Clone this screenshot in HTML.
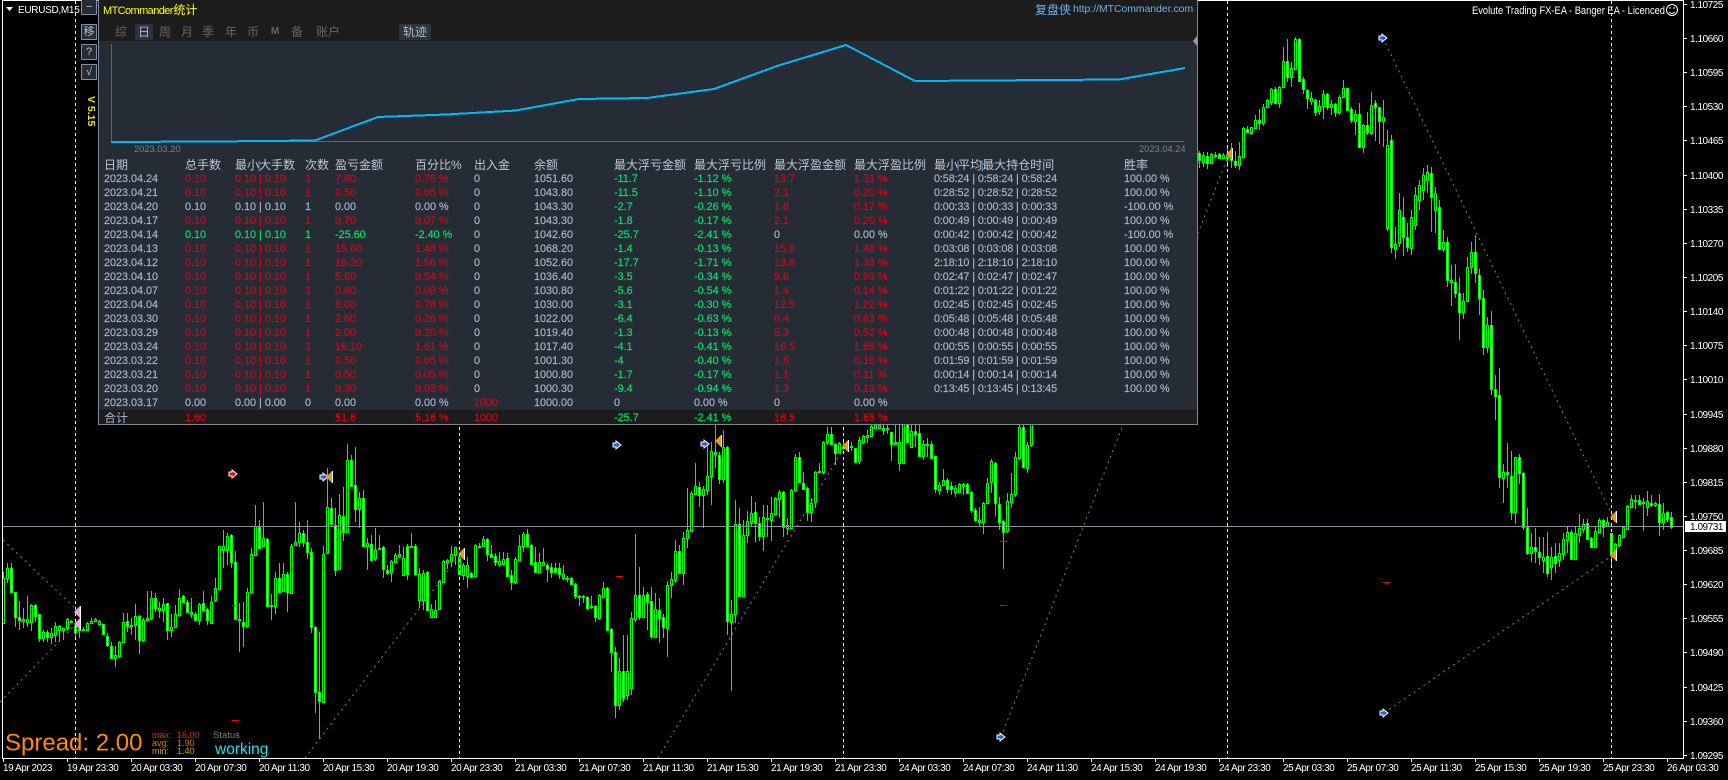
<!DOCTYPE html>
<html lang="zh"><head><meta charset="utf-8"><title>EURUSD,M15</title>
<style>
html,body{margin:0;padding:0;background:#000;width:1728px;height:780px;overflow:hidden;font-family:"Liberation Sans","Noto Sans CJK SC",sans-serif}
svg{position:absolute;left:0;top:0}
.abs{position:absolute;white-space:nowrap}
.ax text{font-size:10px;fill:#fff;letter-spacing:-.45px}
#ph{position:absolute;left:98px;top:0;width:1100px;height:41px;background:#1c1c1c;border-right:1px solid #7d8899;border-left:1px solid #7d8899;box-sizing:border-box}
#pb{position:absolute;left:98px;top:41px;width:1100px;height:384px;background:#262c35;border:1px solid #7d8899;border-top:0;box-sizing:border-box}
#pt{position:absolute;left:99px;top:410px;width:1098px;height:14px;background:#1c1c1c}
table{position:absolute;left:104px;top:158px;border-collapse:collapse;table-layout:fixed;width:1090px}
td{padding:0;height:14px;line-height:14px;font-size:10.8px;white-space:nowrap;color:#a9b8cf;overflow:visible;-webkit-text-stroke:.15px}
tr.r td:nth-child(n+2):nth-child(-n+6){color:#e4000f}
tr.g td:nth-child(n+2):nth-child(-n+6){color:#00e864}
td:nth-child(9),td:nth-child(10){color:#00e864}
td:nth-child(11),td:nth-child(12){color:#e4000f}
td:nth-child(13){letter-spacing:-.1px}
td.n{color:#a9b8cf!important}
td.d{color:#e4000f!important}
tr.h td{color:#bcc7d6!important;font-size:12px;letter-spacing:0;-webkit-text-stroke:0}
tr.h i{font-style:normal;color:#5b8fd0;margin:0 -1.5px}
tr.t td{position:relative;top:1px}
.tab{position:absolute;top:24px;height:16px;line-height:16px;font-size:12px;color:#666;text-align:center;white-space:nowrap}
.btn{position:absolute;left:81px;height:14px;border:1px solid #7f92ad;background:#262c35;color:#b8c0cc;font-size:11px;line-height:14px;text-align:center;box-sizing:content-box;width:14px;border-radius:1px}
</style></head><body>
<svg id="c" width="1728" height="780" viewBox="0 0 1728 780">
<g fill="none" stroke="#808080" stroke-dasharray="2 4" stroke-width="1">
<path d="M3 540L75 608M0 702L75 625M305 758L461 554M658 758L845 446M1001 737L1229 154M1383 38L1613 517M1384 713L1613 555"/>
</g>
<g shape-rendering="crispEdges" stroke="#00ff00" stroke-width="1">
<path id="w" fill="none"/><path id="h" fill="#000"/><path id="b" fill="#fff"/>
</g>
<path shape-rendering="crispEdges" stroke="#8a929e" d="M3 526.5H1683"/>
<path shape-rendering="crispEdges" stroke="#fff" stroke-dasharray="3 3" d="M75.5 1V758M459.5 1V758M843.5 1V758M1227.5 1V758M1611.5 1V758"/>
<path shape-rendering="crispEdges" stroke="#f00" d="M232 605.5h7M232 720.5h7M616 576.5h7M1000 541.5h7M1000 605.5h7M1383 582.5h7"/>
<defs>
<g id="ba"><polygon points="-4,-2 -1,-2 -1,-4 4,0 -1,4 -1,2 -4,2" fill="#2a5fe0" stroke="#fff"/></g>
<g id="ra"><polygon points="-4,-2 -1,-2 -1,-4 4,0 -1,4 -1,2 -4,2" fill="#f00" stroke="#fff"/></g>
<g id="ot"><polygon points="3,-6 3,6 -3,0" fill="#e09a20"/><path d="M3.5 -6V6" stroke="#fff"/></g>
<g id="pt2"><polygon points="3,-6 3,6 -3,0" fill="#f0a0e8"/><path d="M3.5 -6V6" stroke="#fff"/></g>
</defs>
<use href="#ra" x="233" y="474"/>
<use href="#ba" x="324" y="477"/><use href="#ba" x="617" y="445"/><use href="#ba" x="705" y="444"/><use href="#ba" x="1383" y="38"/><use href="#ba" x="1001" y="737"/><use href="#ba" x="1384" y="713"/>
<use href="#ot" x="329" y="477"/><use href="#ot" x="461" y="554"/><use href="#ot" x="718" y="441"/><use href="#ot" x="845" y="446"/><use href="#ot" x="1229" y="154"/><use href="#ot" x="1613" y="517"/><use href="#ot" x="1613" y="555"/>
<use href="#pt2" x="77" y="612"/><use href="#pt2" x="77" y="624"/>
<path shape-rendering="crispEdges" stroke="#fff" fill="none" d="M2.5 0V758.5H1683.5V0M2 .5H1684"/>
<path shape-rendering="crispEdges" stroke="#fff" d="M3.5 758v4M67.5 758v4M131.5 758v4M195.5 758v4M259.5 758v4M323.5 758v4M387.5 758v4M451.5 758v4M515.5 758v4M579.5 758v4M643.5 758v4M707.5 758v4M771.5 758v4M835.5 758v4M899.5 758v4M963.5 758v4M1027.5 758v4M1091.5 758v4M1155.5 758v4M1219.5 758v4M1283.5 758v4M1347.5 758v4M1411.5 758v4M1475.5 758v4M1539.5 758v4M1603.5 758v4M1667.5 758v4"/>
<path shape-rendering="crispEdges" stroke="#fff" d="M1683 4.5h4M1683 38.5h4M1683 72.5h4M1683 106.5h4M1683 140.5h4M1683 175.5h4M1683 209.5h4M1683 243.5h4M1683 277.5h4M1683 311.5h4M1683 345.5h4M1683 379.5h4M1683 414.5h4M1683 448.5h4M1683 482.5h4M1683 516.5h4M1683 550.5h4M1683 584.5h4M1683 618.5h4M1683 652.5h4M1683 687.5h4M1683 721.5h4M1683 755.5h4"/>
<g class="ax">
<text x="3" y="771">19 Apr 2023</text><text x="67" y="771">19 Apr 23:30</text><text x="131" y="771">20 Apr 03:30</text><text x="195" y="771">20 Apr 07:30</text><text x="259" y="771">20 Apr 11:30</text><text x="323" y="771">20 Apr 15:30</text><text x="387" y="771">20 Apr 19:30</text><text x="451" y="771">20 Apr 23:30</text><text x="515" y="771">21 Apr 03:30</text><text x="579" y="771">21 Apr 07:30</text><text x="643" y="771">21 Apr 11:30</text><text x="707" y="771">21 Apr 15:30</text><text x="771" y="771">21 Apr 19:30</text><text x="835" y="771">21 Apr 23:30</text><text x="899" y="771">24 Apr 03:30</text><text x="963" y="771">24 Apr 07:30</text><text x="1027" y="771">24 Apr 11:30</text><text x="1091" y="771">24 Apr 15:30</text><text x="1155" y="771">24 Apr 19:30</text><text x="1219" y="771">24 Apr 23:30</text><text x="1283" y="771">25 Apr 03:30</text><text x="1347" y="771">25 Apr 07:30</text><text x="1411" y="771">25 Apr 11:30</text><text x="1475" y="771">25 Apr 15:30</text><text x="1539" y="771">25 Apr 19:30</text><text x="1603" y="771">25 Apr 23:30</text><text x="1667" y="771">26 Apr 03:30</text>
<text x="1690" y="8">1.10725</text><text x="1690" y="42">1.10660</text><text x="1690" y="76">1.10595</text><text x="1690" y="110">1.10530</text><text x="1690" y="144">1.10465</text><text x="1690" y="179">1.10400</text><text x="1690" y="213">1.10335</text><text x="1690" y="247">1.10270</text><text x="1690" y="281">1.10205</text><text x="1690" y="315">1.10140</text><text x="1690" y="349">1.10075</text><text x="1690" y="383">1.10010</text><text x="1690" y="418">1.09945</text><text x="1690" y="452">1.09880</text><text x="1690" y="486">1.09815</text><text x="1690" y="520">1.09750</text><text x="1690" y="554">1.09685</text><text x="1690" y="588">1.09620</text><text x="1690" y="622">1.09555</text><text x="1690" y="656">1.09490</text><text x="1690" y="691">1.09425</text><text x="1690" y="725">1.09360</text><text x="1690" y="759">1.09295</text>
</g>
<rect x="1685" y="521" width="41" height="11" fill="#fff"/>
<text x="1690" y="530" font-size="10" fill="#000" letter-spacing="-.45">1.09731</text>
<text x="1472" y="14" font-size="11" fill="#fff" textLength="193" lengthAdjust="spacingAndGlyphs">Evolute Trading FX-EA - Banger EA - Licenced</text>
<g fill="none" stroke="#fff"><circle cx="1672" cy="10" r="5.5"/><path d="M1669 12q3 3 6 0"/></g><circle cx="1670" cy="8" r=".8" fill="#fff"/><circle cx="1674" cy="8" r=".8" fill="#fff"/>
<polygon points="6,7 13,7 9.5,11" fill="#fff"/>
<text x="18" y="13" font-size="10" fill="#fff" letter-spacing="-.3">EURUSD,M15</text>
<text x="5" y="750.5" font-size="24" fill="#ff8c00">Spread: 2.00</text>
<g font-size="9">
<text x="152" y="738" fill="#e03000">max:</text><text x="177" y="738" fill="#e03000">16.00</text>
<text x="152" y="746" fill="#d08000">avg:</text><text x="177" y="746" fill="#d08000">1.90</text>
<text x="152" y="754" fill="#c8a000">min:</text><text x="177" y="754" fill="#c8a000">1.40</text>
<text x="213" y="738" fill="#808080" font-size="9.5">Status</text>
</g>
<text x="215" y="754" font-size="15.5" fill="#19e5f5">working</text>
</svg>

<div class="btn" style="top:-1px">−</div>
<div class="btn" style="top:24px">移</div>
<div class="btn" style="top:44px">?</div>
<div class="btn" style="top:64px">√</div>
<div class="abs" style="left:86px;top:96px;writing-mode:vertical-rl;font-size:10.5px;line-height:10px;color:#eaea00;font-weight:bold">V 5.15</div>

<div id="ph"></div><div id="pb"></div><div id="pt"></div>
<div class="abs" style="left:103px;top:3px;font-size:11px;line-height:14px;color:#ffff00;letter-spacing:-.6px">MTCommander<span style="font-size:12px;letter-spacing:0;margin-left:.5px">统计</span></div>
<div class="abs" style="left:1035px;top:3px;font-size:12px;line-height:14px;color:#6cb4ee">复盘侠</div>
<div class="abs" style="left:1073px;top:3px;font-size:10.4px;line-height:14px;color:#6cb4ee">http://MTCommander.com</div>
<div class="tab" style="left:114px;width:14px">综</div>
<div class="tab" style="left:135px;width:18px;background:#2d343e;color:#a8b4c6;border-radius:2px">日</div>
<div class="tab" style="left:158px;width:14px">周</div>
<div class="tab" style="left:180px;width:14px">月</div>
<div class="tab" style="left:201px;width:14px">季</div>
<div class="tab" style="left:224px;width:14px">年</div>
<div class="tab" style="left:246px;width:14px">币</div>
<div class="tab" style="left:268px;width:14px;font-size:10px;font-weight:bold">M</div>
<div class="tab" style="left:290px;width:14px">备</div>
<div class="tab" style="left:315px;width:26px">账户</div>
<div class="tab" style="left:399px;width:32px;background:#2d343e;color:#b0b8c8;border-radius:2px">轨迹</div>

<svg width="1728" height="160" viewBox="0 0 1728 160" style="pointer-events:none">
<path shape-rendering="crispEdges" stroke="#666" fill="none" d="M111.5 44V141.5H1184"/>
<polyline fill="none" stroke="#00b8f5" stroke-width="2" shape-rendering="crispEdges" points="111,142 213,141.5 315,140.5 378,117 446,114.5 516,110.5 579,99 647,98 714,89 777,66 846,45 915,81 983,80.5 1050,80 1119,79.5 1185,68"/>
<polygon points="1197,36 1197,46 1193,41" fill="#9aa0a8"/>
<text x="134" y="152" font-size="9.3" fill="#78828e">2023.03.20</text>
<text x="1139" y="152" font-size="9.3" fill="#78828e">2023.04.24</text>
</svg>

<table>
<colgroup><col style="width:81px"><col style="width:50px"><col style="width:70px"><col style="width:30px"><col style="width:80px"><col style="width:59px"><col style="width:60px"><col style="width:80px"><col style="width:80px"><col style="width:80px"><col style="width:80px"><col style="width:80px"><col style="width:190px"><col style="width:70px"></colgroup>
<tr class="h"><td>日期</td><td>总手数</td><td>最小<i>|</i>大手数</td><td>次数</td><td>盈亏金额</td><td>百分比%</td><td>出入金</td><td>余额</td><td>最大浮亏金额</td><td>最大浮亏比例</td><td>最大浮盈金额</td><td>最大浮盈比例</td><td>最小<i>|</i>平均<i>|</i>最大持仓时间</td><td>胜率</td></tr>
<tr class="r"><td>2023.04.24</td><td>0.10</td><td>0.10 | 0.10</td><td>1</td><td>7.80</td><td>0.75 %</td><td>0</td><td>1051.60</td><td>-11.7</td><td>-1.12 %</td><td>13.7</td><td>1.31 %</td><td>0:58:24 | 0:58:24 | 0:58:24</td><td>100.00 %</td></tr>
<tr class="r"><td>2023.04.21</td><td>0.10</td><td>0.10 | 0.10</td><td>1</td><td>0.50</td><td>0.05 %</td><td>0</td><td>1043.80</td><td>-11.5</td><td>-1.10 %</td><td>2.1</td><td>0.20 %</td><td>0:28:52 | 0:28:52 | 0:28:52</td><td>100.00 %</td></tr>
<tr><td>2023.04.20</td><td>0.10</td><td>0.10 | 0.10</td><td>1</td><td>0.00</td><td>0.00 %</td><td>0</td><td>1043.30</td><td>-2.7</td><td>-0.26 %</td><td>1.8</td><td>0.17 %</td><td>0:00:33 | 0:00:33 | 0:00:33</td><td>-100.00 %</td></tr>
<tr class="r"><td>2023.04.17</td><td>0.10</td><td>0.10 | 0.10</td><td>1</td><td>0.70</td><td>0.07 %</td><td>0</td><td>1043.30</td><td>-1.8</td><td>-0.17 %</td><td>2.1</td><td>0.20 %</td><td>0:00:49 | 0:00:49 | 0:00:49</td><td>100.00 %</td></tr>
<tr class="g"><td>2023.04.14</td><td>0.10</td><td>0.10 | 0.10</td><td>1</td><td>-25.60</td><td>-2.40 %</td><td>0</td><td>1042.60</td><td>-25.7</td><td>-2.41 %</td><td class="n">0</td><td class="n">0.00 %</td><td>0:00:42 | 0:00:42 | 0:00:42</td><td>-100.00 %</td></tr>
<tr class="r"><td>2023.04.13</td><td>0.10</td><td>0.10 | 0.10</td><td>1</td><td>15.60</td><td>1.48 %</td><td>0</td><td>1068.20</td><td>-1.4</td><td>-0.13 %</td><td>15.6</td><td>1.48 %</td><td>0:03:08 | 0:03:08 | 0:03:08</td><td>100.00 %</td></tr>
<tr class="r"><td>2023.04.12</td><td>0.10</td><td>0.10 | 0.10</td><td>1</td><td>16.20</td><td>1.56 %</td><td>0</td><td>1052.60</td><td>-17.7</td><td>-1.71 %</td><td>13.8</td><td>1.33 %</td><td>2:18:10 | 2:18:10 | 2:18:10</td><td>100.00 %</td></tr>
<tr class="r"><td>2023.04.10</td><td>0.10</td><td>0.10 | 0.10</td><td>1</td><td>5.60</td><td>0.54 %</td><td>0</td><td>1036.40</td><td>-3.5</td><td>-0.34 %</td><td>9.6</td><td>0.93 %</td><td>0:02:47 | 0:02:47 | 0:02:47</td><td>100.00 %</td></tr>
<tr class="r"><td>2023.04.07</td><td>0.10</td><td>0.10 | 0.10</td><td>1</td><td>0.80</td><td>0.08 %</td><td>0</td><td>1030.80</td><td>-5.6</td><td>-0.54 %</td><td>1.4</td><td>0.14 %</td><td>0:01:22 | 0:01:22 | 0:01:22</td><td>100.00 %</td></tr>
<tr class="r"><td>2023.04.04</td><td>0.10</td><td>0.10 | 0.10</td><td>1</td><td>8.00</td><td>0.78 %</td><td>0</td><td>1030.00</td><td>-3.1</td><td>-0.30 %</td><td>12.5</td><td>1.22 %</td><td>0:02:45 | 0:02:45 | 0:02:45</td><td>100.00 %</td></tr>
<tr class="r"><td>2023.03.30</td><td>0.10</td><td>0.10 | 0.10</td><td>1</td><td>2.60</td><td>0.26 %</td><td>0</td><td>1022.00</td><td>-6.4</td><td>-0.63 %</td><td>6.4</td><td>0.63 %</td><td>0:05:48 | 0:05:48 | 0:05:48</td><td>100.00 %</td></tr>
<tr class="r"><td>2023.03.29</td><td>0.10</td><td>0.10 | 0.10</td><td>1</td><td>2.00</td><td>0.20 %</td><td>0</td><td>1019.40</td><td>-1.3</td><td>-0.13 %</td><td>5.3</td><td>0.52 %</td><td>0:00:48 | 0:00:48 | 0:00:48</td><td>100.00 %</td></tr>
<tr class="r"><td>2023.03.24</td><td>0.10</td><td>0.10 | 0.10</td><td>1</td><td>16.10</td><td>1.61 %</td><td>0</td><td>1017.40</td><td>-4.1</td><td>-0.41 %</td><td>16.5</td><td>1.65 %</td><td>0:00:55 | 0:00:55 | 0:00:55</td><td>100.00 %</td></tr>
<tr class="r"><td>2023.03.22</td><td>0.10</td><td>0.10 | 0.10</td><td>1</td><td>0.50</td><td>0.05 %</td><td>0</td><td>1001.30</td><td>-4</td><td>-0.40 %</td><td>1.6</td><td>0.16 %</td><td>0:01:59 | 0:01:59 | 0:01:59</td><td>100.00 %</td></tr>
<tr class="r"><td>2023.03.21</td><td>0.10</td><td>0.10 | 0.10</td><td>1</td><td>0.50</td><td>0.05 %</td><td>0</td><td>1000.80</td><td>-1.7</td><td>-0.17 %</td><td>1.1</td><td>0.11 %</td><td>0:00:14 | 0:00:14 | 0:00:14</td><td>100.00 %</td></tr>
<tr class="r"><td>2023.03.20</td><td>0.10</td><td>0.10 | 0.10</td><td>1</td><td>0.30</td><td>0.03 %</td><td>0</td><td>1000.30</td><td>-9.4</td><td>-0.94 %</td><td>1.3</td><td>0.13 %</td><td>0:13:45 | 0:13:45 | 0:13:45</td><td>100.00 %</td></tr>
<tr><td>2023.03.17</td><td>0.00</td><td>0.00 | 0.00</td><td>0</td><td>0.00</td><td>0.00 %</td><td class="d">1000</td><td>1000.00</td><td class="n">0</td><td class="n">0.00 %</td><td class="n">0</td><td class="n">0.00 %</td><td></td><td></td></tr>
<tr class="r t"><td style="font-size:12px;-webkit-text-stroke:0">合计</td><td>1.60</td><td></td><td></td><td>51.6</td><td>5.16 %</td><td class="d">1000</td><td></td><td>-25.7</td><td>-2.41 %</td><td>16.5</td><td>1.65 %</td><td></td><td></td></tr>
</table>

<script>
(function(){
var W='',H='',B='';
function S(n,base,str){
 str.trim().split(/\s+/).forEach(function(t,i){
  var white=t.charAt(0)==='w';if(white)t=t.slice(1);
  var v=t.split(',').map(Number),x=3.5+4*(n+i);
  var y=function(a){return Math.round(base+a/3)};
  var hi=y(v[0]),tp=y(v[1]),bt=y(v[2]),lo=y(v[3]);
  if(bt<=tp)bt=tp+1;
  W+='M'+x+' '+hi+'V'+lo;
  var d='M'+(x-1)+' '+(tp+.5)+'h2V'+(bt+.5)+'h-2z';
  if(white)B+=d;else H+=d;
 });
}
S(0,385,"560,578,715,715 535,550,580,595 w535,550,620,622 w620,622,695,725 w648,695,706,735 670,703,708,730 633,703,710,725 658,660,710,738 w658,660,692,710 w688,688,758,772 735,742,758,770 w735,742,755,772 728,745,755,778 710,722,750,770 720,724,734,772 730,730,734,765 700,703,730,738 705,707,710,715 w715,722,740,760 725,731,736,760 725,731,736,738 712,715,735,738 700,707,714,716 700,703,707,712 705,707,716,722 w716,718,748,750 w745,752,780,785 w770,782,818,822 782,811,818,845 768,772,814,818 685,710,770,775 w685,708,724,740 700,720,724,750 658,694,720,765 w690,694,765,808 700,706,765,770 618,700,706,708 618,638,700,705 w625,638,670,680 650,670,674,700 640,656,674,710 w653,655,736,765 688,727,736,755 660,688,726,730 612,638,690,695 w630,632,652,655 w645,650,682,685 640,682,686,700 w682,686,706,708 655,658,704,720 w618,655,675,680 w670,673,706,720 632,650,714,716 578,610,646,650 482,484,612,615 436,482,494,548 444,452,496,540 w446,450,532,548 w498,532,703,705 655,703,706,800 w652,710,722,785 610,622,722,730 490,508,622,625 360,422,510,512 w405,426,488,490 352,460,482,486 w460,463,662,666 628,660,664,704 560,580,664,686 w535,580,620,625 535,568,618,622 w560,568,622,682 478,482,625,628 350,470,480,484 412,445,470,485 w435,445,472,485 w406,470,502,522 w490,502,725,745 w722,725,922,985 w740,920,947,1062 484,508,950,955 250,365,505,508 w340,368,418,420 w370,420,556,572 328,390,553,555 w305,392,440,468 178,224,440,442 w210,224,302,304 w186,300,372,410 322,338,372,428 w316,338,484,486 460,474,484,556 w450,476,524,528 430,494,520,528 450,488,492,494 w484,487,553,580 w540,556,565,570 525,528,562,592 505,510,530,535 480,508,512,520");
S(100,385,"487,518,570,572 w478,482,568,585 445,482,484,484 w478,482,568,572 550,568,644,668 555,565,645,675 w558,562,674,678 658,673,695,698 645,674,696,700 585,587,673,676 525,528,590,592 522,524,530,552 482,508,528,545 485,487,510,540 510,515,566,570 535,541,570,585 517,539,572,608 w560,563,575,578 478,481,574,576 475,482,484,490 452,463,483,485 w460,462,508,528 w480,508,515,520 w505,514,530,542 500,528,538,545 500,522,538,540 w505,520,572,575 w555,570,592,615 515,522,592,596 450,482,524,526 440,448,482,500 w432,448,482,485 w478,481,536,538 w485,532,560,562 505,530,560,565 488,530,540,542 w535,541,551,590 w535,547,562,578 w535,550,560,565 w535,550,566,582 540,566,580,585 572,578,580,592 w575,580,598,600 w595,598,632,642 630,634,636,664 630,634,636,655 w632,636,668,674 632,664,666,672 w660,663,697,712 628,630,698,705 592,610,635,637 w607,610,735,737 w730,733,802,862 w786,802,960,1000 820,858,960,975 w750,858,940,950 750,858,930,945 680,700,910,930 446,630,702,710 w545,630,695,705 605,630,695,700 w620,628,650,735 w605,648,752,762 625,672,756,758 w640,675,700,775 w688,696,726,760 588,600,728,815 560,582,600,640 465,498,585,595 w480,498,563,566 440,460,563,600 308,436,458,490 318,323,438,440 234,304,328,330 w290,307,330,365 302,312,330,430 180,274,315,330 170,198,272,360 120,202,208,248 w200,210,282,298 135,186,282,295 w184,186,708,750 645,688,712,918 345,418,686,715 w368,418,632,635 405,450,632,635 378,408,450,475 332,384,412,425 w350,382,414,470 w395,414,452,468 360,396,452,498 360,398,402,455 335,385,404,468 335,340,386,390 315,322,342,400 w318,322,425,455 400,420,430,450 312,315,428,432 208,215,316,320 w200,215,292,295");
S(200,385,"w260,295,312,315 w305,308,382,408 340,355,382,412 258,262,352,368 235,258,262,264 168,170,260,268 125,148,172,180 w125,148,178,180 w175,178,205,240 170,175,202,205 172,185,187,196 172,184,188,196 170,184,187,198 w188,190,230,232 155,166,228,236 150,153,172,178 135,150,155,175 90,124,152,155 90,120,130,132 100,120,130,132 w100,130,136,150 100,130,133,146 w140,142,178,228 100,172,176,178 120,172,233,258 70,80,233,236 w60,80,172,174 100,138,186,188 w120,138,146,186 w120,145,212,214 165,178,212,226 160,176,180,215 w168,178,218,222 w212,214,311,325 290,300,315,330 252,286,300,302 w280,286,312,325 w290,304,312,330 300,308,320,335 295,298,320,322 295,298,304,330 w294,298,323,325 w318,320,376,385 w370,376,406,410 366,406,410,425 350,354,410,446 280,294,355,358 222,228,292,324 w230,233,354,392 w335,358,410,435 w405,408,440,552 325,348,438,445 265,328,352,368 200,216,328,335 100,126,220,225 w100,126,245,248 170,180,248,265 100,110,180,185");
S(299,20,"w392,400,420,445 395,406,426,440 w395,408,428,446 398,403,428,430 396,405,408,415 w398,403,413,416 400,405,413,415 385,405,415,440 w370,415,420,445 w392,422,436,445 365,408,436,450 322,325,410,412 w318,326,336,338 320,322,338,345 285,301,324,328 w268,300,310,330 252,262,310,318 238,240,262,264 205,208,245,255 w200,208,248,250 198,200,248,265 82,122,202,205 w56,122,172,185 125,145,172,202 50,58,146,150 w55,58,182,185 w170,178,208,222 w208,210,235,268 215,235,242,255 w238,240,275,288 240,258,272,285 210,222,258,298 w218,222,262,270 240,252,262,285 w248,252,276,292 225,230,275,285 180,205,232,235 w203,205,270,272 w262,268,300,310 270,283,302,345 w250,283,380,382 312,314,380,398 w275,314,335,345 216,254,338,345 w240,250,262,362 w262,262,302,372 240,292,302,380");
S(346,230,"-300,-255,-6,3 w-285,-270,51,68 -10,42,57,88 -110,-60,40,52 w-100,-40,22,78 w-20,20,52,65 -60,-40,55,76 -130,-105,-15,0 -150,-135,-90,-60 -185,-165,-120,-90 -195,-175,-150,-110 w-190,-170,-100,5 -130,-110,-60,10 w-90,-70,56,60 0,35,58,66 w22,35,150,170 105,150,155,228 w102,155,190,205 w140,188,247,330 190,212,247,266 82,110,212,214 36,65,112,132 w15,65,130,158 w118,134,205,255 w180,205,352,375 262,286,350,368 w243,286,478,495 w435,476,497,570 w415,496,740,775 702,725,743,820 w640,725,733,775 w663,737,845,870 680,682,845,882 w672,682,728,762 w726,730,892,900");
S(381,420,"w265,320,400,405 340,380,400,425 w325,380,392,430 w350,395,410,435 350,410,420,460 w335,408,460,470 380,410,440,480 w370,408,430,460 370,400,420,440 338,358,402,420 320,336,360,400 w330,336,418,420 322,340,418,420 282,323,345,370 298,312,327,340 w298,310,356,360 w350,354,382,385 320,332,382,385 295,300,335,338 w296,300,320,350 290,306,318,320 w338,340,405,440 370,372,400,410 342,345,375,380 318,320,350,352 255,258,326,328 225,238,260,262 225,240,242,266 w225,240,252,252 235,246,249,332 212,244,260,288 w225,248,254,260 245,250,256,260 w222,253,305,347 248,278,305,330 w272,276,298,305 w276,292,320,326");
document.getElementById('w').setAttribute('d',W);
document.getElementById('h').setAttribute('d',H);
document.getElementById('b').setAttribute('d',B);
})();
</script>
</body></html>
